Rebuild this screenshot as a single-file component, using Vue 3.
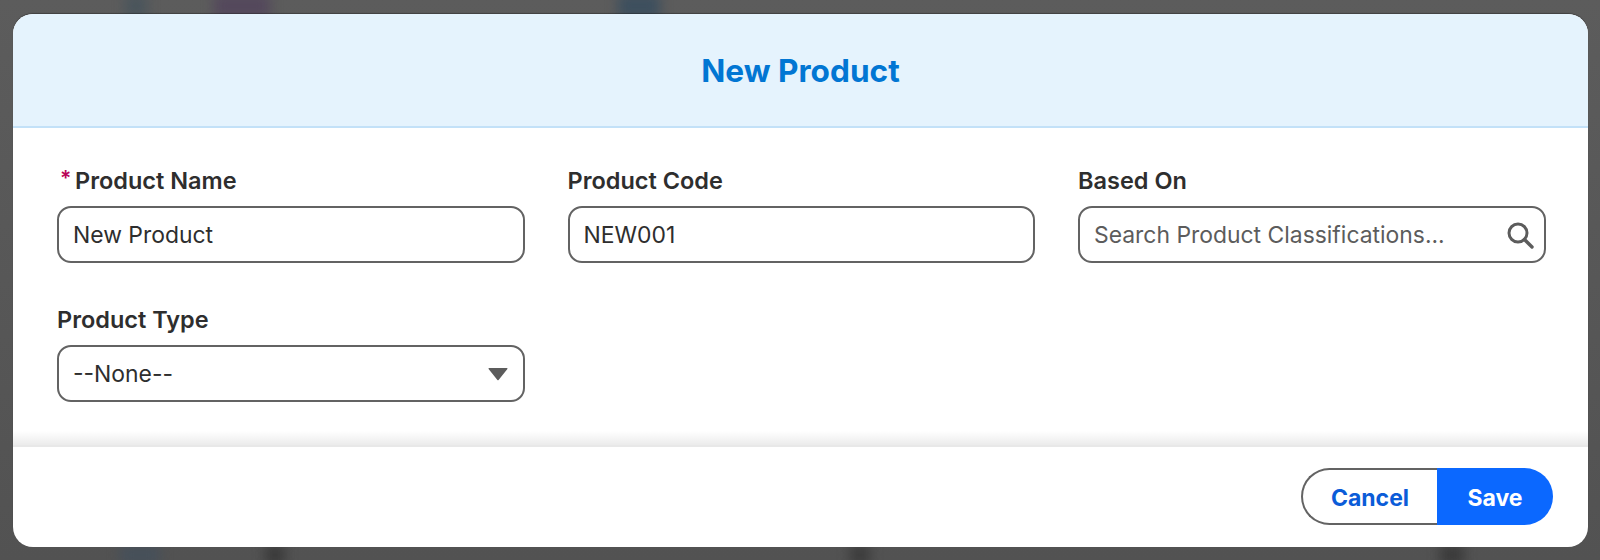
<script setup>
const blobs = [
  { left: '214px', top: '-6px', width: '56px', height: '24px', background: '#54485c' },
  { left: '125px', top: '-6px', width: '22px', height: '24px', background: '#4a555c' },
  { left: '618px', top: '-6px', width: '42px', height: '24px', background: '#3d4f5e' },
  { left: '265px', top: '545px', width: '20px', height: '20px', background: '#3a3a3a' },
  { left: '850px', top: '545px', width: '20px', height: '20px', background: '#3c3c3c' },
  { left: '1440px', top: '545px', width: '24px', height: '20px', background: '#3a3a3a' },
  { left: '120px', top: '545px', width: '40px', height: '20px', background: '#46505a' },
]
</script>

<template>
  <div class="page">
    <span v-for="(b, i) in blobs" :key="i" class="blob" :style="b"></span>
    <div class="modal">
      <header class="head">
        <h2>New Product</h2>
      </header>
      <main class="body">
        <div class="field">
          <label class="req"><span class="star">*</span>Product Name</label>
          <div class="control">New Product</div>
        </div>
        <div class="field">
          <label>Product Code</label>
          <div class="control">NEW001</div>
        </div>
        <div class="field">
          <label>Based On</label>
          <div class="control search">
            <span class="ph">Search Product Classifications...</span>
            <svg class="icon" viewBox="0 0 28 28" width="28" height="28" aria-hidden="true">
              <circle cx="12" cy="12" r="9" fill="none" stroke="#5c5c5c" stroke-width="3" />
              <path d="M18.5 18.5l7.5 7.5" fill="none" stroke="#5c5c5c" stroke-width="3.4" stroke-linecap="round" />
            </svg>
          </div>
        </div>
        <div class="field">
          <label>Product Type</label>
          <div class="control select">
            <span>--None--</span>
            <svg class="caret" viewBox="0 0 20 14" width="20" height="14" aria-hidden="true">
              <path d="M1 1h18a.6.6 0 0 1 .4 1L10.6 13a.8.8 0 0 1-1.2 0L.6 2A.6.6 0 0 1 1 1z" fill="#5c5c5c" />
            </svg>
          </div>
        </div>
      </main>
      <footer class="foot">
        <div class="btns">
          <button class="cancel" type="button">Cancel</button>
          <button class="save" type="button">Save</button>
        </div>
      </footer>
    </div>
  </div>
</template>

<style>
html, body { margin: 0; }
</style>

<style scoped>
.page {
  position: relative;
  box-sizing: border-box;
  width: 1600px;
  height: 560px;
  padding: 14px 12px 13px 13px;
  background: linear-gradient(to bottom, #5c5c5c, #525252);
  overflow: hidden;
  font-family: Inter, "Liberation Sans", sans-serif;
  color: #2e2e2e;
}
.blob {
  position: absolute;
  filter: blur(6px);
}
.modal {
  position: relative;
  height: 533px;
  display: flex;
  flex-direction: column;
  background: #fff;
  border-radius: 20px;
  overflow: hidden;
  box-shadow: 0 -1px 1px rgba(0, 0, 0, 0.3);
}
.head {
  box-sizing: border-box;
  height: 114px;
  flex: none;
  display: flex;
  align-items: center;
  justify-content: center;
  background: #e5f3fd;
  border-bottom: 2px solid #c3e1f8;
}
.head h2 {
  margin: 0;
  font-size: 31.6px;
  font-weight: 700;
  color: #0176d3;
}
.body {
  flex: 1;
  display: grid;
  grid-template-columns: repeat(3, 467.5px);
  grid-auto-rows: max-content;
  column-gap: 43px;
  row-gap: 42px;
  padding: 38px 0 0 44px;
  position: relative;
}
.body::after {
  content: "";
  position: absolute;
  left: 0;
  right: 0;
  bottom: 0;
  height: 14px;
  background: linear-gradient(to bottom, rgba(0, 0, 0, 0), rgba(0, 0, 0, 0.08));
}
.field {
  display: flex;
  flex-direction: column;
}
label {
  display: block;
  height: 30px;
  line-height: 30px;
  margin-bottom: 10px;
  font-size: 23.5px;
  font-weight: 600;
  color: #2e2e2e;
}
.req {
  position: relative;
  padding-left: 18px;
}
.star {
  position: absolute;
  left: 3px;
  top: -2px;
  color: #ba0558;
  font-size: 21px;
}
.control {
  box-sizing: border-box;
  height: 57px;
  display: flex;
  align-items: center;
  justify-content: space-between;
  padding: 0 14px;
  border: 2px solid #636363;
  border-radius: 14px;
  font-size: 22.9px;
  color: #2e2e2e;
}
.ph { color: #5c5c5c; }
.search { padding-right: 10px; }
.select { padding-right: 15px; }
.foot {
  flex: none;
  height: 102px;
  box-sizing: border-box;
  border-top: 2px solid #e8e8e8;
  display: flex;
  justify-content: flex-end;
  padding: 21px 35px 0 0;
}
.btns {
  display: flex;
  height: 57px;
}
button {
  height: 57px;
  margin: 0;
  padding: 2px 0 0;
  font-family: inherit;
  font-size: 23px;
  font-weight: 700;
}
.cancel {
  box-sizing: border-box;
  width: 136px;
  background: #fff;
  color: #0b5cd8;
  border: 2px solid #636363;
  border-right: 0;
  border-radius: 29px 0 0 29px;
}
.save {
  width: 116px;
  background: #0b68ff;
  color: #fff;
  border: 0;
  border-radius: 0 29px 29px 0;
}
</style>
